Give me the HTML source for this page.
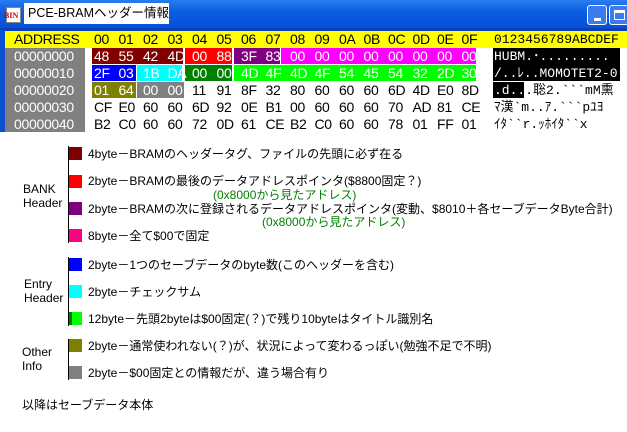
<!DOCTYPE html>
<html><head><meta charset="utf-8"><style>
*{margin:0;padding:0;box-sizing:border-box}
body{width:627px;height:432px;background:#fff;position:relative;overflow:hidden;font-family:"Liberation Sans","Noto Sans CJK JP",sans-serif}
.a{position:absolute;white-space:nowrap}
.hx{font-size:14px;line-height:17px;letter-spacing:-0.3px}
.hx i{display:inline-block;width:24.5px;font-style:normal}
.as{font-family:"Liberation Mono","Noto Sans CJK JP",monospace;font-size:13px;line-height:17px;letter-spacing:0}
.t{font-size:12px;line-height:14px;color:#000}
.g{font-size:12px;line-height:14px;color:#008000}
.sw{position:absolute;left:69px;width:13px;height:13px}
.vl{position:absolute;left:68px;width:1px;background:#000}
</style></head><body>
<div class="a" style="left:0;top:0;width:627px;height:30px;background:linear-gradient(#2a7cf0,#0a5ce0 40%,#0550d8)"></div>
<div class="a" style="left:0;top:28px;width:627px;height:3px;background:#0b3fb8"></div>
<div class="a" style="left:6px;top:7px;width:15px;height:16px;background:#fff;border:1px solid #888"></div>
<div class="a" style="left:4px;top:11px;font:bold 8px 'Liberation Serif',serif;color:#c00">BIN</div>
<div class="a" style="left:24px;top:3px;width:145px;height:21px;background:#fff;font-size:12.5px;line-height:21px;padding-left:4px">PCE-BRAMヘッダー情報</div>
<div class="a" style="left:587px;top:5px;width:20px;height:20px;background:#3a7cf0;border:1px solid #fff;border-radius:3px"><div class="a" style="left:6px;top:12px;width:7px;height:3px;background:#fff"></div></div>
<div class="a" style="left:609px;top:5px;width:20px;height:20px;background:#3a7cf0;border:1px solid #fff;border-radius:3px"><div class="a" style="left:4px;top:4px;width:11px;height:10px;border:1px solid #fff;border-top:3px solid #fff"></div></div>
<div class="a" style="left:0;top:30px;width:5px;height:102px;background:#0b50d0"></div>
<div class="a" style="left:5px;top:31px;width:622px;height:17px;background:#ff0"></div>
<div class="a hx" style="left:14px;top:31px">ADDRESS</div>
<div class="a hx" style="left:94px;top:31px"><i>00</i><i>01</i><i>02</i><i>03</i><i>04</i><i>05</i><i>06</i><i>07</i><i>08</i><i>09</i><i>0A</i><i>0B</i><i>0C</i><i>0D</i><i>0E</i><i>0F</i></div>
<div class="a as" style="left:494px;top:31px">0123456789ABCDEF</div>
<div class="a" style="left:5px;top:48px;width:80px;height:84px;background:#808080"></div>
<div class="a hx" style="left:14px;top:48px;color:#fff;line-height:17px">00000000<br>00000010<br>00000020<br>00000030<br>00000040</div>
<div class="a" style="left:92px;top:48px;width:91px;height:16px;background:#800000"></div>
<div class="a" style="left:185px;top:48px;width:47px;height:16px;background:#f00"></div>
<div class="a" style="left:234px;top:48px;width:46px;height:16px;background:#800080"></div>
<div class="a" style="left:281px;top:48px;width:195px;height:16px;background:#f0f"></div>
<div class="a" style="left:92px;top:65px;width:44px;height:16px;background:#00f"></div>
<div class="a" style="left:137px;top:65px;width:45px;height:16px;background:#0ff"></div>
<div class="a" style="left:185px;top:65px;width:47px;height:16px;background:#008000"></div>
<div class="a" style="left:234px;top:65px;width:242px;height:16px;background:#0f0"></div>
<div class="a" style="left:92px;top:82px;width:44px;height:16px;background:#808000"></div>
<div class="a" style="left:137px;top:82px;width:47px;height:16px;background:#808080"></div>
<div class="a" style="left:493px;top:48px;width:127px;height:33px;background:#000"></div>
<div class="a" style="left:493px;top:82px;width:31px;height:16px;background:#000"></div>
<div class="a" style="left:0;top:0;width:627px;height:132px;overflow:hidden">
<div class="a hx" style="left:94px;top:48px;color:#fff"><i>48</i><i>55</i><i>42</i><i>4D</i><i>00</i><i>88</i><i>3F</i><i>83</i><i>00</i><i>00</i><i>00</i><i>00</i><i>00</i><i>00</i><i>00</i><i>00</i></div>
<div class="a hx" style="left:94px;top:65px;color:#fff"><i>2F</i><i>03</i><i>1B</i><i>DA</i><i>00</i><i>00</i><i>4D</i><i>4F</i><i>4D</i><i>4F</i><i>54</i><i>45</i><i>54</i><i>32</i><i>2D</i><i>30</i></div>
<div class="a hx" style="left:94px;top:82px"><i style="color:#fff">01</i><i style="color:#fff">64</i><i style="color:#fff">00</i><i style="color:#fff">00</i><i>11</i><i>91</i><i>8F</i><i>32</i><i>80</i><i>60</i><i>60</i><i>60</i><i>6D</i><i>4D</i><i>E0</i><i>8D</i></div>
<div class="a hx" style="left:94px;top:99px"><i>CF</i><i>E0</i><i>60</i><i>60</i><i>6D</i><i>92</i><i>0E</i><i>B1</i><i>00</i><i>60</i><i>60</i><i>60</i><i>70</i><i>AD</i><i>81</i><i>CE</i></div>
<div class="a hx" style="left:94px;top:116px"><i>B2</i><i>C0</i><i>60</i><i>60</i><i>72</i><i>0D</i><i>61</i><i>CE</i><i>B2</i><i>C0</i><i>60</i><i>60</i><i>78</i><i>01</i><i>FF</i><i>01</i></div>
<div class="a as" style="left:494px;top:48px;color:#fff">HUBM.･.........</div>
<div class="a as" style="left:494px;top:65px;color:#fff">/..ﾚ..MOMOTET2-0</div>
<div class="a as" style="left:494px;top:82px"><span style="color:#fff">.d..</span>.聡2.&#96;&#96;&#96;mM熏</div>
<div class="a as" style="left:494px;top:99px">ﾏ漢&#96;m..ｱ.&#96;&#96;&#96;pﾕﾖ</div>
<div class="a as" style="left:494px;top:116px">ｲﾀ&#96;&#96;r.ｯﾎｲﾀ&#96;&#96;x</div>
</div>
<div class="vl" style="top:146px;height:97px"></div>
<div class="vl" style="top:257px;height:69px"></div>
<div class="vl" style="top:339px;height:41px"></div>
<div class="sw" style="top:147px;background:#800000"></div>
<div class="sw" style="top:175px;background:#f00"></div>
<div class="sw" style="top:202px;background:#800080"></div>
<div class="sw" style="top:229px;background:#ff0080"></div>
<div class="sw" style="top:258px;background:#00f"></div>
<div class="sw" style="top:285px;background:#0ff"></div>
<div class="sw" style="top:312px;background:#0f0"></div>
<div class="a" style="left:69px;top:312px;width:3px;height:13px;background:#008000"></div>
<div class="sw" style="top:339px;background:#808000"></div>
<div class="sw" style="top:366px;background:#808080"></div>
<div class="a t" style="left:23px;top:182px">BANK<br>Header</div>
<div class="a t" style="left:24px;top:277px">Entry<br>Header</div>
<div class="a t" style="left:22px;top:345px">Other<br>Info</div>
<div class="a t" style="left:88px;top:147px">4byte－BRAMのヘッダータグ、ファイルの先頭に必ず在る</div>
<div class="a t" style="left:88px;top:174px">2byte－BRAMの最後のデータアドレスポインタ($8800固定？)</div>
<div class="a g" style="left:213px;top:188px">(0x8000から見たアドレス)</div>
<div class="a t" style="left:88px;top:202px">2byte－BRAMの次に登録されるデータアドレスポインタ(変動、$8010＋各セーブデータByte合計)</div>
<div class="a g" style="left:262px;top:215px">(0x8000から見たアドレス)</div>
<div class="a t" style="left:88px;top:229px">8byte－全て$00で固定</div>
<div class="a t" style="left:88px;top:258px">2byte－1つのセーブデータのbyte数(このヘッダーを含む)</div>
<div class="a t" style="left:88px;top:285px">2byte－チェックサム</div>
<div class="a t" style="left:88px;top:312px">12byte－先頭2byteは$00固定(？)で残り10byteはタイトル識別名</div>
<div class="a t" style="left:88px;top:339px">2byte－通常使われない(？)が、状況によって変わるっぽい(勉強不足で不明)</div>
<div class="a t" style="left:88px;top:366px">2byte－$00固定との情報だが、違う場合有り</div>
<div class="a t" style="left:22px;top:398px">以降はセーブデータ本体</div>
</body></html>
